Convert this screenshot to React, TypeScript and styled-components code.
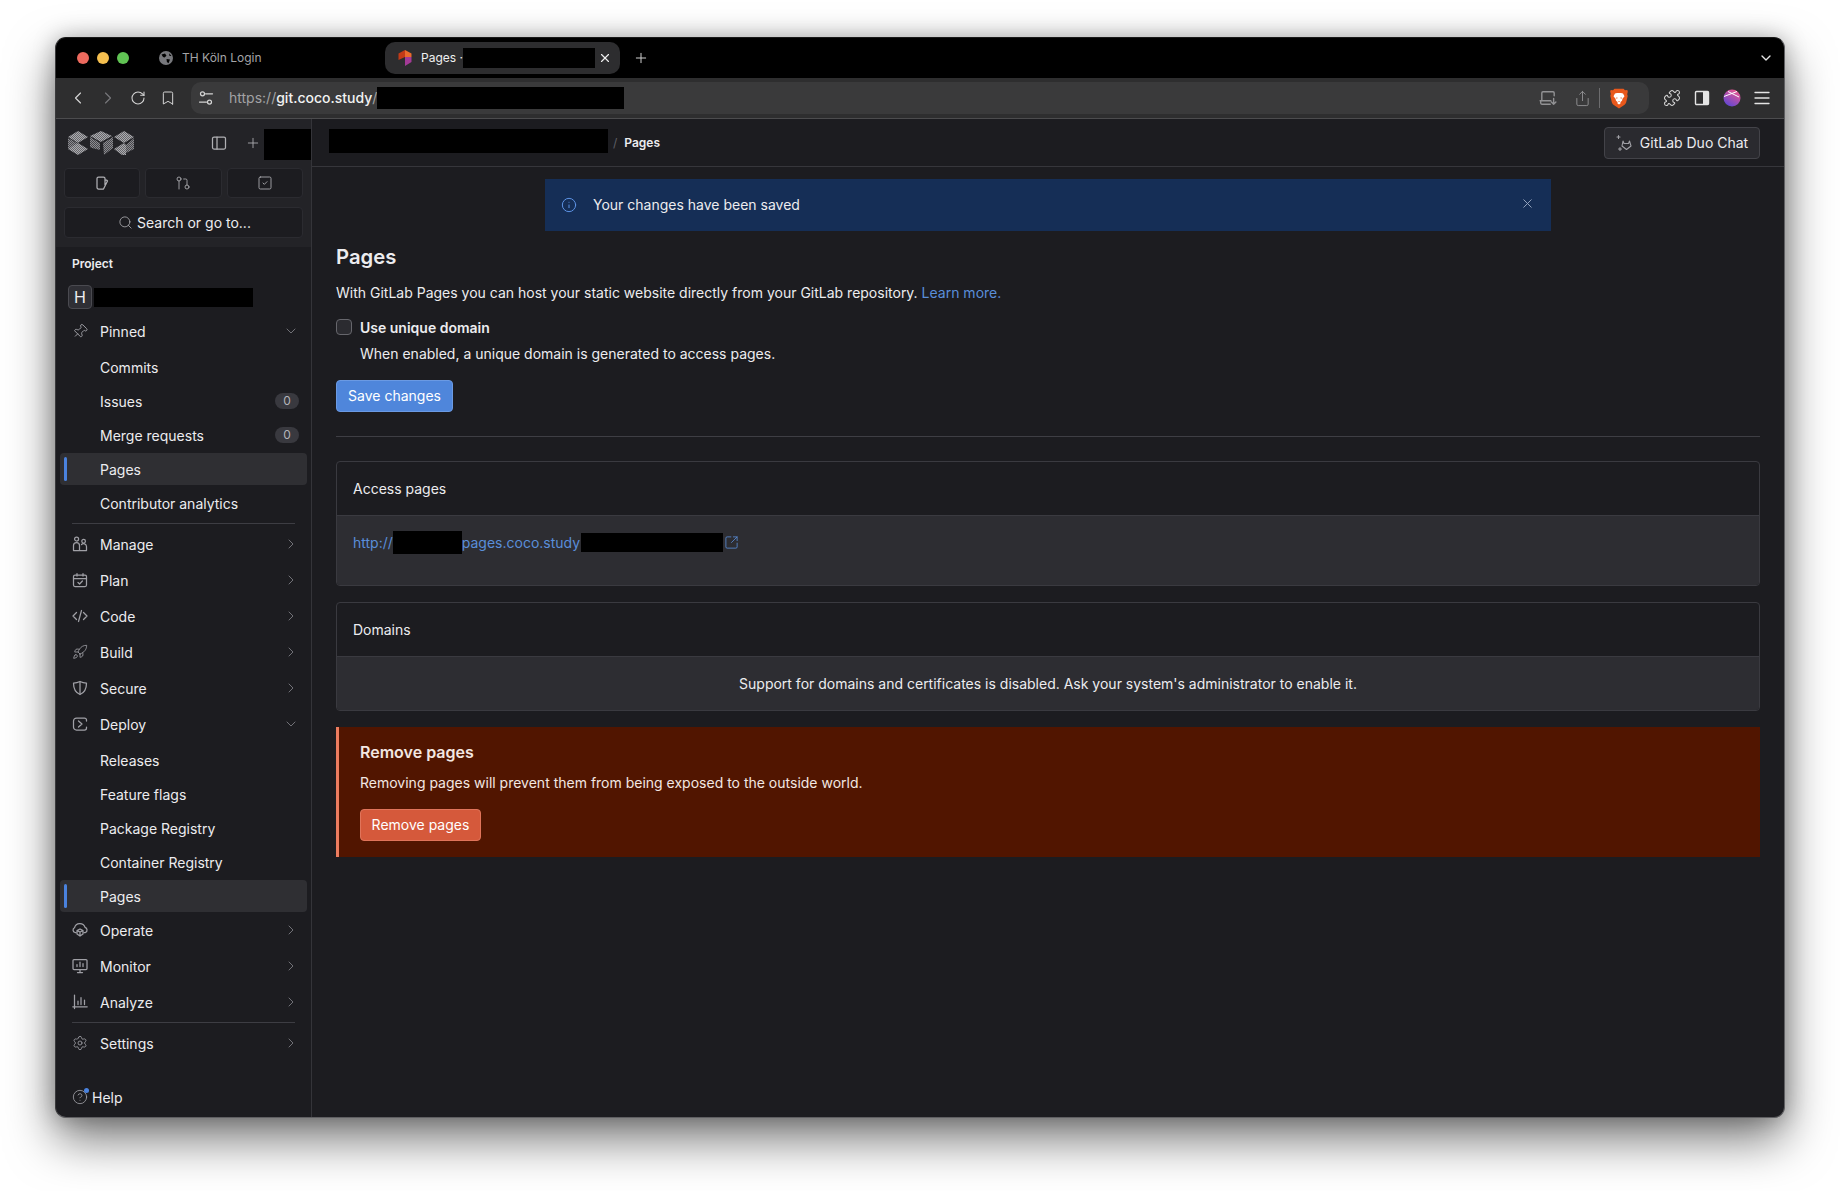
import React from "react";
import styled, { createGlobalStyle } from "styled-components";
import {
  ChevronDown, ChevronLeft, ChevronRight, CircleHelp, GitPullRequest, Info, Pin, Plus, Puzzle,
  RotateCw, Rocket, Search, Settings, Share, SquareArrowOutUpRight, SquareCheck, X, Bookmark,
} from "lucide-react";

const Global = createGlobalStyle`
  * { box-sizing: border-box; }
  html, body { margin: 0; padding: 0; background: #fff; }
  body { font-family: Inter, "Liberation Sans", sans-serif; font-size: 14px; color: #ececef; -webkit-font-smoothing: antialiased; }
`;

const Page = styled.div`
  width: 1840px; height: 1191px; padding: 37px 55px 73px; background: #fff; overflow: hidden;
`;
const Window = styled.div`
  width: 1730px; height: 1081px; display: flex; flex-direction: column; overflow: hidden;
  border: 1px solid #5f5f62; border-top-color: #1a1a1a; border-left-color: #3a3a3c; border-radius: 11px; background: #1c1c20;
  box-shadow: 0 22px 48px rgba(0,0,0,.52), 0 0 22px rgba(0,0,0,.26);
`;
const Redact = styled.span<{ $w: number; $h: number }>`
  display: inline-block; flex: none; width: ${p => p.$w}px; height: ${p => p.$h}px; background: #000;
`;

/* Tab strip */
const TabStrip = styled.div`
  height: 40px; flex: none; background: #000; display: flex; align-items: center; padding: 0 10px 0 21px; color: #ddd;
`;
const Lights = styled.div`display: flex; gap: 8px; margin-right: 30px;`;
const Light = styled.span<{ $c: string }>`
  width: 12px; height: 12px; border-radius: 50%; background: ${p => p.$c};
`;
const IdleTab = styled.div`
  width: 226px; display: flex; align-items: center; gap: 9px; font-size: 12px; color: #a4a4a6; padding-bottom: 1px;
`;
const ActiveTab = styled.div`
  width: 235px; height: 32px; border-radius: 10px; background: #2d2d2f; display: flex; align-items: center;
  padding-left: 12px; font-size: 12px; color: #f0f0f0;
`;
const TabTitle = styled.span`margin: 0 0 1px 8px; white-space: nowrap;`;
const NewTab = styled.span`display: flex; margin-left: 13px; color: #cfcfcf;`;
const TabMenu = styled.span`display: flex; margin-left: auto; color: #e6e6e6;`;
const TabClose = styled.span`display: flex; margin-left: 3px; color: #eee;`;

/* Toolbar */
const Toolbar = styled.div`
  height: 41px; flex: none; background: #2e2e2f; border-bottom: 1px solid #4c4c4e; display: flex; align-items: center; padding: 0 7px;
`;
const NavSlot = styled.span<{ $dim?: boolean }>`
  width: 30px; display: flex; justify-content: center; align-items: center; color: ${p => (p.$dim ? "#77777a" : "#d4d4d4")};
`;
const AddressBar = styled.div`
  flex: 1; height: 32px; margin: 0 8px; padding: 0 21px 0 7px; border-radius: 10px; background: #3a3a3b;
  display: flex; align-items: center; color: #a2a2a4;
`;
const TuneSlot = styled.span`width: 16px; display: flex; color: #d4d4d4;`;
const UrlText = styled.span`flex: none; width: 148px; margin: 0 0 1px 15px; font-size: 14px; color: #a2a2a4; white-space: nowrap;`;
const UrlHost = styled.b`font-weight: 500; color: #f2f2f2;`;
const AddressEnd = styled.div`margin-left: auto; display: flex; align-items: center; gap: 17px; color: #929294;`;
const AddressDivider = styled.span`width: 1px; height: 20px; background: #6c6c6e; margin: 0 -7px 0 -9px;`;

/* Body */
const Body = styled.div`flex: 1; min-height: 0; display: flex;`;
const Sidebar = styled.aside`
  width: 256px; flex: none; border-right: 1px solid #343439; display: flex; flex-direction: column;
`;
const SideTop = styled.div`
  height: 128px; flex: none; background: #232327; padding: 10px 8px 9px 8px; display: flex; flex-direction: column;
`;
const BrandRow = styled.div`
  height: 31px; display: flex; align-items: center; margin-right: -8px; color: #b4b4b8;
`;
const LogoWrap = styled.span`display: flex; margin: 0 auto 3px 4px;`;
const BrandButton = styled.span`display: flex; margin: 0 18px 3px 0; color: #b0b0b4;`;
const BrandPlus = styled.span`display: flex; margin: 0 3px 3px 0; color: #b0b0b4;`;
const QuickRow = styled.div`display: grid; grid-template-columns: repeat(3, 1fr); gap: 5px; margin-top: 8px;`;
const QuickButton = styled.span`
  height: 30px; border-radius: 4px; background: #1c1c20; border: 1px solid #2b2b30;
  display: flex; align-items: center; justify-content: center; color: #b0b0b4;
`;
const SearchBox = styled.div`
  height: 31px; margin-top: 9px; border-radius: 4px; background: #1c1c20; border: 1px solid #2b2b30;
  display: flex; align-items: center; justify-content: center; gap: 4px; font-size: 14px; color: #ececef; padding-left: 2px;
`;
const SearchIcon = styled.span`display: flex; color: #b0b0b4;`;
const ContextLabel = styled.div`
  margin: 9px 0 0 16px; height: 16px; line-height: 16px; font-size: 12px; font-weight: 600; color: #ececef;
`;
const ProjectRow = styled.div`display: flex; align-items: center; gap: 2px; margin: 13px 0 5px 12px; height: 24px;`;
const Avatar = styled.span`
  width: 24px; height: 24px; border-radius: 4px; border: 1px solid #4a4a50; background: #2f2f35;
  display: flex; align-items: center; justify-content: center; font-size: 16px; color: #ececef;
`;
const Nav = styled.nav`display: flex; flex-direction: column;`;
const TopItem = styled.div<{ $pull?: boolean; $gapBelow?: boolean }>`
  height: 36px; flex: none; margin: ${p => (p.$pull ? "-1px" : "0")} 4px ${p => (p.$gapBelow ? "1px" : "0")} 4px; padding: 0 8px 2px 12px;
  display: flex; align-items: center; gap: 12px; color: #ececef; font-size: 14px;
`;
const IconSlot = styled.span`width: 16px; height: 16px; display: flex; align-items: center; justify-content: center; color: #a0a0a6; flex: none;`;
const Chevron = styled.span`margin-left: auto; display: flex; color: #7f7f85;`;
const SubSlot = styled.div`height: 34px; flex: none; margin: 0 4px;`;
const SubItem = styled.div<{ $active?: boolean }>`
  position: relative; height: 32px; border-radius: 4px; padding: 0 8px 0 40px; display: flex; align-items: center;
  background: ${p => (p.$active ? "#2f2f33" : "transparent")}; font-size: 14px; color: #ececef;
`;
const ActiveMark = styled.span`
  position: absolute; left: 4px; top: 4px; bottom: 4px; width: 3px; border-radius: 2px; background: #4a82de;
`;
const Count = styled.span`
  margin: 0 0 1px auto; width: 24px; height: 16px; border-radius: 8px; background: #39393f;
  display: flex; align-items: center; justify-content: center; font-size: 12px; color: #b4b4b9;
`;
const Divider = styled.div<{ $top: number }>`
  height: 1px; flex: none; margin: ${p => p.$top}px 16px 3px 16px; background: #3d3d43;
`;
const HelpRow = styled.div`
  margin: auto 0 8px 16px; height: 24px; display: flex; align-items: center; gap: 4px; font-size: 14px; color: #ececef;
`;
const HelpIcon = styled.span`position: relative; display: flex; color: #a0a0a6;`;
const HelpDot = styled.span`
  position: absolute; right: -1px; top: -1px; width: 5px; height: 5px; border-radius: 50%; background: #4a82de;
`;

const Main = styled.main`flex: 1; min-width: 0; display: flex; flex-direction: column;`;
const TopBar = styled.header`
  height: 48px; flex: none; border-bottom: 1px solid #36363b; padding: 0 24px 0 17px;
  display: flex; align-items: center;
`;
const Crumbs = styled.div`display: flex; align-items: center; margin-top: -3px;`;
const CrumbSep = styled.span`margin: 3px 7px 0 5px; font-size: 12px; color: #5f5f66;`;
const CrumbNow = styled.span`margin-top: 3px; font-size: 12px; font-weight: 600; color: #ececef;`;
const DuoButton = styled.span`
  margin-left: auto; width: 156px; height: 32px; border-radius: 4px; border: 1px solid #434349; background: #2a2a2f;
  display: flex; align-items: center; justify-content: center; gap: 6px; font-size: 14px; color: #ececef;
`;
const DuoIconWrap = styled.span`display: flex; color: #a0a0a6;`;
const Content = styled.div`padding: 0 24px; display: flex; flex-direction: column;`;
const Alert = styled.div`
  width: 1006px; height: 52px; margin: 12px auto 0; background: #152e56; padding: 0 16px 1px;
  display: flex; align-items: center; gap: 16px; color: #ececef; font-size: 14px;
`;
const AlertIcon = styled.span`display: flex; color: #5d93e4;`;
const AlertClose = styled.span`display: flex; margin-left: auto; color: #9aa9c2; margin-top: -3px;`;
const Title = styled.h1`margin: 12px 0 0; height: 28px; line-height: 28px; font-size: 20.25px; font-weight: 600; color: #ececef;`;
const Paragraph = styled.p`margin: 12px 0 0; line-height: 20px; font-size: 14px; color: #ececef;`;
const LinkText = styled.a`color: #5a8ed9; text-decoration: none;`;
const CheckRow = styled.label`display: flex; align-items: center; gap: 8px; margin-top: 14px; height: 20px; font-weight: 600;`;
const CheckBox = styled.span`width: 16px; height: 16px; border-radius: 4px; border: 1px solid #66666c; background: #2b2b30;`;
const CheckHelp = styled.div`margin: 7px 0 0 24px; line-height: 20px; color: #ececef;`;
const PrimaryButton = styled.span`
  margin-top: 16px; align-self: flex-start; width: 117px; height: 32px; border-radius: 4px; background: #4f86db; border: 1px solid #6b9ae3;
  display: flex; align-items: center; justify-content: center; color: #fff; padding-bottom: 1px;
`;
const Rule = styled.hr`margin: 24px 0 24px; border: 0; height: 1px; background: #3e3e44; width: 100%;`;
const Card = styled.section<{ $gap?: boolean }>`
  margin-top: ${p => (p.$gap ? "16px" : "0")}; border: 1px solid #3a3a40; border-radius: 4px; overflow: hidden;
`;
const CardHead = styled.div`height: 53px; padding-left: 16px; display: flex; align-items: center; color: #ececef;`;
const CardBody = styled.div<{ $h: number; $center?: boolean }>`
  height: ${p => p.$h}px; background: #2d2d32; border-top: 1px solid #3a3a40; display: flex; align-items: ${p => (p.$center ? "center" : "flex-start")};
  justify-content: ${p => (p.$center ? "center" : "flex-start")}; padding: ${p => (p.$center ? "0" : "15px 16px 0")}; color: #ececef;
`;
const UrlLine = styled.div`display: flex; align-items: center; color: #5a8ed9;`;
const UrlTail = styled.span`margin-left: 1px; display: flex;`;
const LinkIcon = styled.span`display: flex; margin-left: 1px; color: #5a8ed9;`;
const Danger = styled.section`
  margin-top: 16px; height: 130px; background: #511500; border-left: 3px solid #ec7c5f; padding: 13px 21px; display: flex; flex-direction: column;
`;
const DangerTitle = styled.div`height: 24px; line-height: 24px; font-size: 16px; font-weight: 600; color: #f3e7e2;`;
const DangerText = styled.div`margin-top: 9px; line-height: 20px; color: #f3e7e2;`;
const DangerButton = styled.span`
  margin-top: 16px; width: 121px; height: 32px; border-radius: 4px; background: #d5593b; border: 1px solid #e0745a; padding-bottom: 1px;
  display: flex; align-items: center; justify-content: center; color: #fff;
`;
const PinTilt = styled(Pin)`transform: rotate(45deg);`;

const stroke = { fill: "none", stroke: "currentColor", strokeWidth: 1.25, strokeLinecap: "round" as const, strokeLinejoin: "round" as const };
const I = ({ children, s = 16 }: { children: React.ReactNode; s?: number }) => (
  <svg width={s} height={s} viewBox="0 0 16 16" {...stroke}>{children}</svg>
);
const ManageIcon = () => <I><circle cx="4.6" cy="3" r="2" /><circle cx="11.6" cy="5.2" r="1.8" /><path d="M1.5 14.5v-5a3 3 0 0 1 6 0v5zM7.5 14.5h7v-4a3 3 0 0 0-5-2" /></I>;
const PlanIcon = () => <I><rect x="1.5" y="3" width="13" height="11.5" rx="1.5" /><path d="M1.5 6.5h13M5 1.5v2.5M11 1.5v2.5M6 10.5l1.6 1.5 2.8-3" /></I>;
const CodeIcon = () => <I><path d="M4.5 4.5 1 8l3.5 3.5M11.5 4.5 15 8l-3.5 3.5M9.5 2.5l-3 11" /></I>;
const ShieldIcon = () => <I><path d="M8 1.5c2 1 4 1.5 6.5 1.5 0 5.5-1.5 9.5-6.500 11.5C3 12.5 1.500 8.500 1.500 3 4 3 6 2.500 8 1.500z" /><path d="M8 2v12" /></I>;
const DeployIcon = () => <I><path d="M14.500 5V4a2 2 0 0 0-2-2h-8a3 3 0 0 0-3 3v6a3 3 0 0 0 3 3h8a2 2 0 0 0 2-2v-1" /><path d="M6.500 5l3.500 3-3.500 3" /></I>;
const OperateIcon = () => <I><path d="M4 10.500H3a2.500 2.500 0 0 1-.5-4.700A5.500 5.500 0 0 1 13 5.300a2.800 2.800 0 0 1 .5 5.200H12" /><path d="M8 7l3 1.600v3.400L8 14l-3-2V8.600zM5 8.600 8 10l3-1.400M8 10v4" /></I>;
const MonitorIcon = () => <I><rect x="1" y="1.500" width="14" height="10" rx="1" /><path d="M5.500 14.500h5M8 11.500v3M5 8.500V6.500M8 8.500V4M11 8.500V5.500" /></I>;
const AnalyzeIcon = () => <I><path d="M2.500 1v13.500M.8 12.800h14.400M6 10.500V7M9 10.500V3.500M12.500 10.500V6" /></I>;
const MugIcon = () => <I><path d="M9.500 14H4.500A1.500 1.500 0 0 1 3 12.500v-9A1.500 1.500 0 0 1 4.500 2h5A1.500 1.500 0 0 1 11 3.500V5h1.500L13.500 6 9.500 14zM11 5v5" /></I>;
const PanelIcon = () => <I><rect x="1.500" y="2" width="13" height="12" rx="1.500" /><path d="M6 2v12" /></I>;
const Tune = () => <I><circle cx="4.500" cy="3.800" r="2" /><circle cx="11.500" cy="12" r="2" /><path d="M7.500 3.800h7M1.500 12h7" /></I>;
const Laptop = () => <I s={18}><path d="M2.500 10V3.500a1 1 0 0 1 1-1h9a1 1 0 0 1 1 1V6M1 10.500h9.500M1.500 10.500v2a1 1 0 0 0 1 1H10M13 8.500v5M11 11.500l2 2 2-2" /></I>;
const RightPanel = () => (
  <svg width="18" height="18" viewBox="0 0 18 18"><rect x="2.500" y="2.500" width="13" height="13" rx="1" fill="none" stroke="#e4e4e4" strokeWidth="1.400" /><rect x="10" y="2.500" width="5.500" height="13" fill="#e4e4e4" /></svg>
);
const MenuLines = () => (
  <svg width="18" height="18" viewBox="0 0 18 18" stroke="#e4e4e4" strokeWidth="1.300" strokeLinecap="round"><path d="M2 3.500h14M2 9h14M2 14.500h14" /></svg>
);
const Brave = () => (
  <svg width="18" height="21" viewBox="0 0 18 21">
    <path d="M4.500.8h9L15 2.300l2.300-.2.500 1.600-.6 2.500.5 1.700-1.500 6.400c-.3 1.200-1 2-2 2.700L9 20.400 3.800 16.900c-1-.7-1.700-1.500-2-2.700L.3 7.800l.5-1.700-.6-2.500.5-1.600 2.300.2z" fill="#e8581c" />
    <path d="M5 5.500 7 5h4l2 .5 1.500 2.700-2 2.500-.5 2-1.500 1.300v1.500L9 16.500 7.500 15.500V14L6 12.700l-.5-2-2-2.500z" fill="#fff" />
    <path d="M6.500 9.200 8 10l-1.800.8zM11.500 9.200 10 10l1.800.8zM8 13h2l-1 1z" fill="#e8581c" />
  </svg>
);
const ProfileAvatar = () => (
  <svg width="18" height="18" viewBox="0 0 18 18">
    <defs><linearGradient id="av" x1="0.8" y1="0" x2="0.2" y2="1"><stop offset="0" stopColor="#f2578e" /><stop offset="1" stopColor="#5a46d6" /></linearGradient></defs>
    <circle cx="9" cy="9" r="8.500" fill="url(#av)" />
    <path d="M1 7.500 14 2.500M5 2.500 16 8" stroke="#fff" strokeWidth="1" fill="none" />
  </svg>
);
const Favicon = () => (
  <svg width="16" height="18" viewBox="0 0 16 18">
    <path d="M8 1 1.500 4.500V11L8 8z" fill="#c23a17" /><path d="M8 1l6.500 3.500V8L8 8z" fill="#ea6a2c" />
    <path d="M8 8l6.500 0V13L8 17z" fill="#a33a96" />
  </svg>
);
const Globe = () => (
  <svg width="14" height="14" viewBox="0 0 14 14">
    <circle cx="7" cy="7" r="7" fill="#77787c" />
    <path d="M2.500 3.500 6 2.500 7.500 4.800 5.500 6.500 4 6zM7.500 8l3.500.5-1.500 3.800-1.600-1.300zM10 2.300l2.500 2.600L10.500 5z" fill="#000" />
  </svg>
);
const Duo = () => (
  <svg width="18" height="18" viewBox="0 0 18 18" fill="none" stroke="currentColor" strokeWidth="1.100" strokeLinejoin="round">
    <path d="M7 7l1 2.500h4.500L13.500 7l1.500 5-4.500 3.500L6 12z" />
    <path d="M2.500 1.500v3M1 3h3M4 13.500v3M2.500 15h3" strokeLinecap="round" />
  </svg>
);
const Logo = () => (
  <svg width="66" height="24" viewBox="0 0 66 24">
    <defs>
      <pattern id="chk" width="2" height="2" patternUnits="userSpaceOnUse">
        <rect width="2" height="2" fill="#66666b" /><rect width="1" height="1" fill="#acacaf" /><rect x="1" y="1" width="1" height="1" fill="#acacaf" />
      </pattern>
      <pattern id="chkd" width="2" height="2" patternUnits="userSpaceOnUse">
        <rect width="2" height="2" fill="#47474c" /><rect width="1" height="1" fill="#8c8c90" /><rect x="1" y="1" width="1" height="1" fill="#8c8c90" />
      </pattern>
    </defs>
    <path d="M10 0 20 6 10 12 0 6z" fill="url(#chk)" />
    <path d="M0 7 9 12V16L0 18z" fill="url(#chkd)" />
    <path d="M0 18 10 12 20 18 10 24z" fill="url(#chk)" />
    <path d="M33 0 44 5 33 11 22 5z" fill="url(#chk)" />
    <path d="M22 6 32 12V19L24 17 22 16z" fill="url(#chkd)" />
    <path d="M35 12 45 6V17L36 24z" fill="url(#chkd)" />
    <path d="M56 0 66 6 56 12 46 6z" fill="url(#chk)" />
    <path d="M66 7V18L58 22V14z" fill="url(#chkd)" />
    <path d="M46 18 56 12 58 14V24H54z" fill="url(#chk)" />
  </svg>
);

const chevron = (open?: boolean) => (
  <Chevron>{open ? <ChevronDown size={16} strokeWidth={1.3} /> : <ChevronRight size={16} strokeWidth={1.3} />}</Chevron>
);

const App = () => (
  <>
    <Global />
    <Page>
      <Window>
        <TabStrip>
          <Lights>
            <Light $c="#ed6a5e" /><Light $c="#f5bf4f" /><Light $c="#61c454" />
          </Lights>
          <IdleTab><Globe />TH Köln Login</IdleTab>
          <ActiveTab>
            <Favicon />
            <TabTitle>Pages ·</TabTitle>
            <Redact $w={132} $h={20} />
            <TabClose><X size={14} strokeWidth={2} /></TabClose>
          </ActiveTab>
          <NewTab><Plus size={16} strokeWidth={1.5} /></NewTab>
          <TabMenu><ChevronDown size={16} strokeWidth={2} /></TabMenu>
        </TabStrip>

        <Toolbar>
          <NavSlot><ChevronLeft size={20} strokeWidth={1.4} /></NavSlot>
          <NavSlot $dim><ChevronRight size={20} strokeWidth={1.4} /></NavSlot>
          <NavSlot><RotateCw size={16} strokeWidth={1.6} /></NavSlot>
          <NavSlot><Bookmark size={16} strokeWidth={1.5} /></NavSlot>
          <AddressBar>
            <TuneSlot><Tune /></TuneSlot>
            <UrlText>https://<UrlHost>git.coco.study</UrlHost>/</UrlText>
            <Redact $w={247} $h={22} />
            <AddressEnd>
              <Laptop />
              <Share size={17} strokeWidth={1.3} />
              <AddressDivider />
              <Brave />
            </AddressEnd>
          </AddressBar>
          <NavSlot><Puzzle size={18} strokeWidth={1.4} /></NavSlot>
          <NavSlot><RightPanel /></NavSlot>
          <NavSlot><ProfileAvatar /></NavSlot>
          <NavSlot><MenuLines /></NavSlot>
        </Toolbar>

        <Body>
          <Sidebar>
            <SideTop>
              <BrandRow>
                <LogoWrap><Logo /></LogoWrap>
                <BrandButton><PanelIcon /></BrandButton>
                <BrandPlus><Plus size={16} strokeWidth={1.3} /></BrandPlus>
                <Redact $w={47} $h={31} />
              </BrandRow>
              <QuickRow>
                <QuickButton><MugIcon /></QuickButton>
                <QuickButton><GitPullRequest size={16} strokeWidth={1.3} /></QuickButton>
                <QuickButton><SquareCheck size={16} strokeWidth={1.3} /></QuickButton>
              </QuickRow>
              <SearchBox><SearchIcon><Search size={15} strokeWidth={1.3} /></SearchIcon>Search or go to...</SearchBox>
            </SideTop>
            <ContextLabel>Project</ContextLabel>
            <ProjectRow><Avatar>H</Avatar><Redact $w={159} $h={19} /></ProjectRow>
            <Nav>
              <TopItem $gapBelow><IconSlot><PinTilt size={17} strokeWidth={1.4} /></IconSlot>Pinned{chevron(true)}</TopItem>
              <SubSlot><SubItem>Commits</SubItem></SubSlot>
              <SubSlot><SubItem>Issues<Count>0</Count></SubItem></SubSlot>
              <SubSlot><SubItem>Merge requests<Count>0</Count></SubItem></SubSlot>
              <SubSlot><SubItem $active><ActiveMark />Pages</SubItem></SubSlot>
              <SubSlot><SubItem>Contributor analytics</SubItem></SubSlot>
              <Divider $top={2} />
              <TopItem><IconSlot><ManageIcon /></IconSlot>Manage{chevron()}</TopItem>
              <TopItem><IconSlot><PlanIcon /></IconSlot>Plan{chevron()}</TopItem>
              <TopItem><IconSlot><CodeIcon /></IconSlot>Code{chevron()}</TopItem>
              <TopItem><IconSlot><Rocket size={16} strokeWidth={1.25} /></IconSlot>Build{chevron()}</TopItem>
              <TopItem><IconSlot><ShieldIcon /></IconSlot>Secure{chevron()}</TopItem>
              <TopItem $gapBelow><IconSlot><DeployIcon /></IconSlot>Deploy{chevron(true)}</TopItem>
              <SubSlot><SubItem>Releases</SubItem></SubSlot>
              <SubSlot><SubItem>Feature flags</SubItem></SubSlot>
              <SubSlot><SubItem>Package Registry</SubItem></SubSlot>
              <SubSlot><SubItem>Container Registry</SubItem></SubSlot>
              <SubSlot><SubItem $active><ActiveMark />Pages</SubItem></SubSlot>
              <TopItem $pull><IconSlot><OperateIcon /></IconSlot>Operate{chevron()}</TopItem>
              <TopItem><IconSlot><MonitorIcon /></IconSlot>Monitor{chevron()}</TopItem>
              <TopItem><IconSlot><AnalyzeIcon /></IconSlot>Analyze{chevron()}</TopItem>
              <Divider $top={1} />
              <TopItem><IconSlot><Settings size={16} strokeWidth={1.25} /></IconSlot>Settings{chevron()}</TopItem>
            </Nav>
            <HelpRow>
              <HelpIcon><CircleHelp size={16} strokeWidth={1.25} /><HelpDot /></HelpIcon>
              Help
            </HelpRow>
          </Sidebar>

          <Main>
            <TopBar>
              <Crumbs>
                <Redact $w={279} $h={24} />
                <CrumbSep>/</CrumbSep>
                <CrumbNow>Pages</CrumbNow>
              </Crumbs>
              <DuoButton><DuoIconWrap><Duo /></DuoIconWrap>GitLab Duo Chat</DuoButton>
            </TopBar>
            <Content>
              <Alert>
                <AlertIcon><Info size={16} strokeWidth={1.5} /></AlertIcon>
                Your changes have been saved
                <AlertClose><X size={15} strokeWidth={1.5} /></AlertClose>
              </Alert>
              <Title>Pages</Title>
              <Paragraph>
                With GitLab Pages you can host your static website directly from your GitLab repository. <LinkText>Learn more.</LinkText>
              </Paragraph>
              <CheckRow><CheckBox />Use unique domain</CheckRow>
              <CheckHelp>When enabled, a unique domain is generated to access pages.</CheckHelp>
              <PrimaryButton>Save changes</PrimaryButton>
              <Rule />
              <Card>
                <CardHead>Access pages</CardHead>
                <CardBody $h={70}>
                  <UrlLine>
                    http://<Redact $w={69} $h={23} />pages.coco.study
                    <UrlTail><Redact $w={142} $h={19} /></UrlTail>
                    <LinkIcon><SquareArrowOutUpRight size={15} strokeWidth={1.3} /></LinkIcon>
                  </UrlLine>
                </CardBody>
              </Card>
              <Card $gap>
                <CardHead>Domains</CardHead>
                <CardBody $h={54} $center>Support for domains and certificates is disabled. Ask your system's administrator to enable it.</CardBody>
              </Card>
              <Danger>
                <DangerTitle>Remove pages</DangerTitle>
                <DangerText>Removing pages will prevent them from being exposed to the outside world.</DangerText>
                <DangerButton>Remove pages</DangerButton>
              </Danger>
            </Content>
          </Main>
        </Body>
      </Window>
    </Page>
  </>
);

export default App;
